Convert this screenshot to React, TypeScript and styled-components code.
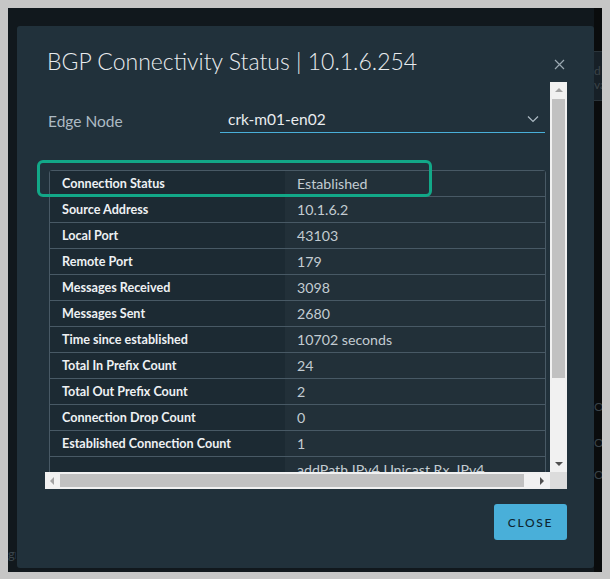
import React from "react";
import styled, { createGlobalStyle } from "styled-components";

const GlobalStyle = createGlobalStyle`
  html, body {
    margin: 0;
    padding: 0;
    background: #c6c6c6;
    font-family: Lato, "Open Sans", sans-serif;
  }
`;

const rows: [string, string][] = [
  ["Connection Status", "Established"],
  ["Source Address", "10.1.6.2"],
  ["Local Port", "43103"],
  ["Remote Port", "179"],
  ["Messages Received", "3098"],
  ["Messages Sent", "2680"],
  ["Time since established", "10702 seconds"],
  ["Total In Prefix Count", "24"],
  ["Total Out Prefix Count", "2"],
  ["Connection Drop Count", "0"],
  ["Established Connection Count", "1"],
  ["", "addPath IPv4 Unicast Rx, IPv4"],
];

const Frame = styled.div`
  width: 610px;
  height: 579px;
  padding: 8px;
  box-sizing: border-box;
`;

const Backdrop = styled.div`
  position: relative;
  width: 594px;
  height: 564px;
  display: flex;
  overflow: hidden;
`;

const PageMain = styled.div`
  flex: 1;
  background: #11181d;
  display: flex;
  align-items: flex-end;
  padding-bottom: 10px;
  color: #3a454c;
  font-size: 13px;
`;

const PageSide = styled.div`
  width: 8px;
  background: #0a0c0d;
  display: flex;
  flex-direction: column;
  color: #3b4449;
  font-size: 12px;
  line-height: 12px;
`;

const SideHead = styled.div`
  margin-top: 43px;
  height: 50px;
  border-top: 1px solid #2a343a;
  border-bottom: 1px solid #2a343a;
  background: #172027;
  padding-top: 13px;
  box-sizing: border-box;
  display: flex;
  flex-direction: column;
  gap: 2px;
`;

const GhostText = styled.span<{ $top?: number }>`
  width: 8px;
  overflow: hidden;
  white-space: nowrap;
  margin-top: ${(p) => p.$top ?? 0}px;
`;

const Modal = styled.div`
  position: absolute;
  left: 9px;
  top: 18px;
  width: 577px;
  height: 542px;
  box-sizing: border-box;
  background: #21313b;
  border-radius: 3px;
  padding: 0 27px 28px 28px;
  display: flex;
  flex-direction: column;
`;

const Header = styled.div`
  height: 56px;
  display: flex;
  align-items: flex-start;
  justify-content: space-between;
`;

const Title = styled.h3`
  margin: 20px 0 0 2px;
  font-weight: 300;
  font-size: 23px;
  line-height: 30px;
  color: #e9ecef;
  letter-spacing: 0;
`;

const CloseX = styled.button`
  margin: 31px 1px 0 0;
  width: 14px;
  height: 14px;
  padding: 0;
  border: none;
  background: none;
  display: flex;
  align-items: center;
  justify-content: center;
`;

const ScrollBox = styled.div`
  position: relative;
  height: 407px;
  display: grid;
  grid-template-columns: 1fr 17px;
  grid-template-rows: 1fr 17px;
`;

const Viewport = styled.div`
  overflow: hidden;
  padding: 26px 0 0 3px;
`;

const FormRow = styled.div`
  display: flex;
  align-items: center;
  height: 25px;
`;

const FormLabel = styled.label`
  width: 172px;
  font-size: 15.5px;
  color: #adbbc4;
`;

const Select = styled.div`
  width: 325px;
  height: 25px;
  box-sizing: border-box;
  border-bottom: 1px solid #49afd9;
  display: flex;
  align-items: center;
  justify-content: space-between;
  padding: 0 6px 2px 8px;
  font-size: 15.5px;
  color: #e9ecef;
`;

const TableWrap = styled.div`
  margin: 37px 0 0 1px;
  width: 497px;
`;

const Table = styled.table`
  width: 100%;
  border-collapse: separate;
  border-spacing: 0;
  border: 1px solid #485965;
  border-radius: 3px;
  table-layout: fixed;
`;

const Th = styled.th`
  width: 223px;
  height: 25px;
  padding: 0 0 0 12px;
  text-align: left;
  font-size: 12.6px;
  font-weight: 700;
  color: #eef1f3;
  background: #1c2a33;
  border-bottom: 1px solid #485965;
  white-space: nowrap;
`;

const Td = styled.td`
  height: 25px;
  padding: 0 0 0 12px;
  font-size: 14.2px;
  color: #c3ccd2;
  background: #223039;
  border-bottom: 1px solid #485965;
  white-space: nowrap;
`;

const Highlight = styled.div`
  position: absolute;
  left: -8px;
  top: 78px;
  width: 395px;
  height: 37px;
  box-sizing: border-box;
  border: 3px solid #12a888;
  border-radius: 6px;
  pointer-events: none;
`;

const VTrack = styled.div`
  background: #f1f1f1;
  display: flex;
  flex-direction: column;
  align-items: center;
`;

const HTrack = styled.div`
  background: #f1f1f1;
  display: flex;
  align-items: center;
`;

const Corner = styled.div`
  background: #dcdcdc;
`;

const Arrow = styled.div<{ $dir: "up" | "down" | "left" | "right"; $dark?: boolean }>`
  flex: none;
  width: 0;
  height: 0;
  border-style: solid;
  ${(p) => {
    const c = p.$dark ? "#505050" : "#a3a3a3";
    switch (p.$dir) {
      case "up":
        return `border-width: 0 4px 4px 4px; border-color: transparent transparent ${c} transparent; margin: 6px 0 7px;`;
      case "down":
        return `border-width: 4px 4px 0 4px; border-color: ${c} transparent transparent transparent; margin: 7px 0 6px;`;
      case "left":
        return `border-width: 4px 4px 4px 0; border-color: transparent ${c} transparent transparent; margin: 0 6px 0 5px;`;
      default:
        return `border-width: 4px 0 4px 4px; border-color: transparent transparent transparent ${c}; margin: 0 6px 0 7px;`;
    }
  }}
`;

const VThumb = styled.div`
  width: 13px;
  height: 279px;
  background: #c1c1c1;
`;

const VSpace = styled.div`
  flex: 1;
`;

const HThumb = styled.div`
  width: 464px;
  height: 13px;
  background: #c1c1c1;
`;

const HSpace = styled.div`
  flex: 1;
`;

const Footer = styled.div`
  margin-top: 15px;
  display: flex;
  justify-content: flex-end;
`;

const Button = styled.button`
  height: 36px;
  width: 73px;
  border: none;
  border-radius: 3px;
  background: #49afd9;
  color: #0e2530;
  font-family: Lato, sans-serif;
  font-size: 12px;
  font-weight: 500;
  letter-spacing: 1.7px;
  padding: 0;
`;

export default function App() {
  return (
    <Frame>
      <GlobalStyle />
      <Backdrop>
        <PageMain>
          <GhostText>gr</GhostText>
        </PageMain>
        <PageSide>
          <SideHead>
            <GhostText>d</GhostText>
            <GhostText>va</GhostText>
          </SideHead>
          <GhostText $top={300}>Or</GhostText>
          <GhostText $top={24}>Or</GhostText>
          <GhostText $top={20}>Or</GhostText>
        </PageSide>
        <Modal>
          <Header>
            <Title>BGP Connectivity Status | 10.1.6.254</Title>
            <CloseX aria-label="close">
              <svg width="11" height="11" viewBox="0 0 11 11">
                <path d="M1 1L10 10M10 1L1 10" stroke="#9aa8b1" strokeWidth="1.2" />
              </svg>
            </CloseX>
          </Header>
          <ScrollBox>
            <Viewport>
              <FormRow>
                <FormLabel>Edge Node</FormLabel>
                <Select>
                  <span>crk-m01-en02</span>
                  <svg width="12" height="8" viewBox="0 0 12 8">
                    <path d="M1 1.5L6 6.5L11 1.5" stroke="#adbbc4" strokeWidth="1.2" fill="none" />
                  </svg>
                </Select>
              </FormRow>
              <TableWrap>
                <Table>
                  <tbody>
                    {rows.map(([k, v], i) => (
                      <tr key={i}>
                        <Th>{k}</Th>
                        <Td>{v}</Td>
                      </tr>
                    ))}
                  </tbody>
                </Table>
              </TableWrap>
            </Viewport>
            <VTrack>
              <Arrow $dir="up" />
              <VThumb />
              <VSpace />
              <Arrow $dir="down" $dark />
            </VTrack>
            <HTrack>
              <Arrow $dir="left" />
              <HThumb />
              <HSpace />
              <Arrow $dir="right" $dark />
            </HTrack>
            <Corner />
            <Highlight />
          </ScrollBox>
          <Footer>
            <Button>CLOSE</Button>
          </Footer>
        </Modal>
      </Backdrop>
    </Frame>
  );
}
